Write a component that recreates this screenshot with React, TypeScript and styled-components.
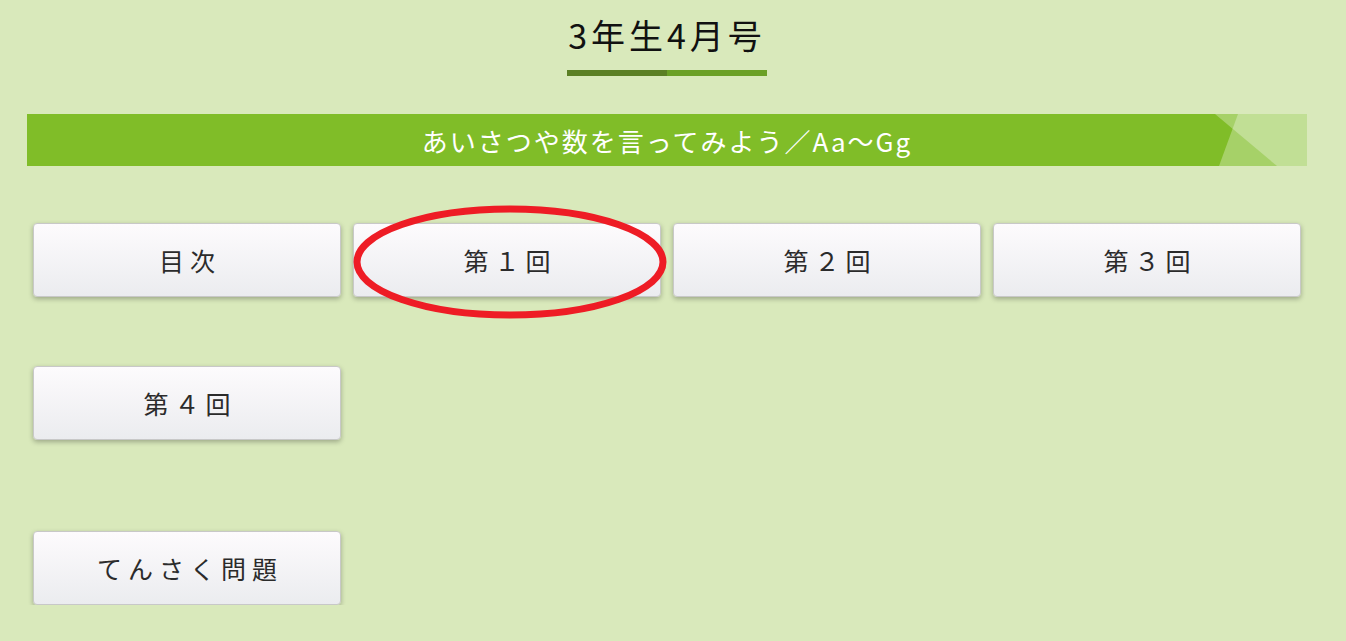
import styled, { createGlobalStyle } from "styled-components";

const GlobalStyle = createGlobalStyle`
  body {
    margin: 0;
    background: #d9e9bb;
    font-family: "Noto Sans CJK JP", "Noto Sans", sans-serif;
  }
`;

const Page = styled.div`
  width: 1280px;
  margin: 0 27px;
`;

const Header = styled.header`
  display: flex;
  flex-direction: column;
  align-items: center;
  padding-top: 14px;
`;

const Title = styled.h1`
  margin: 0;
  font-size: 34px;
  line-height: 42px;
  font-weight: 400;
  letter-spacing: 4px;
  color: #111;
`;

const Underline = styled.div`
  width: 200px;
  height: 6px;
  margin-top: 14px;
  background: linear-gradient(to right, #5b7f24 50%, #6ba026 50%);
`;

const Banner = styled.h2`
  position: relative;
  margin: 38px 0 0;
  height: 52px;
  display: flex;
  align-items: center;
  justify-content: center;
  background: #80bd28;
  color: #fff;
  font-size: 26px;
  font-weight: 400;
  letter-spacing: 2px;
  overflow: hidden;
`;

const Corner = styled.svg`
  position: absolute;
  right: 0;
  top: 0;
`;

const Grid = styled.div<{ $top: number }>`
  display: grid;
  grid-template-columns: repeat(4, 308px);
  column-gap: 12px;
  row-gap: 69px;
  padding: 0 6px;
  margin-top: ${(p) => p.$top}px;
`;

const Button = styled.button`
  position: relative;
  height: 74px;
  border: 1px solid #c8c8c8;
  border-radius: 4px;
  background: linear-gradient(#fdfbfd, #ebecef);
  box-shadow: 0 2px 5px rgba(0, 0, 0, 0.28);
  font-family: inherit;
  font-size: 25px;
  letter-spacing: 6px;
  color: #2b2b2b;
  padding: 0 0 0 6px;
  cursor: pointer;
`;

const Circle = styled.svg`
  position: absolute;
  left: -1px;
  top: -19px;
  pointer-events: none;
`;

const Marker = () => (
  <Circle width="314" height="114" viewBox="0 0 314 114">
    <ellipse cx="157" cy="57" rx="153" ry="53" fill="none" stroke="#ee1c25" strokeWidth="7" />
  </Circle>
);

const lessons = ["目次", "第１回", "第２回", "第３回", "第４回"];

function App() {
  return (
    <>
      <GlobalStyle />
      <Page>
        <Header>
          <Title>3年生4月号</Title>
          <Underline />
        </Header>
        <Banner>
          あいさつや数を言ってみよう／Aa～Gg
          <Corner width="92" height="52" viewBox="0 0 92 52">
            <polygon points="0,0 92,0 92,52 62,52" fill="#fff" fillOpacity="0.3" />
            <polygon points="23,0 92,0 92,52 4,52" fill="#fff" fillOpacity="0.3" />
          </Corner>
        </Banner>
        <Grid $top={57}>
          {lessons.map((label, i) => (
            <Button key={label}>
              {label}
              {i === 1 && <Marker />}
            </Button>
          ))}
        </Grid>
        <Grid $top={91}>
          <Button>てんさく問題</Button>
        </Grid>
      </Page>
    </>
  );
}

export default App;
